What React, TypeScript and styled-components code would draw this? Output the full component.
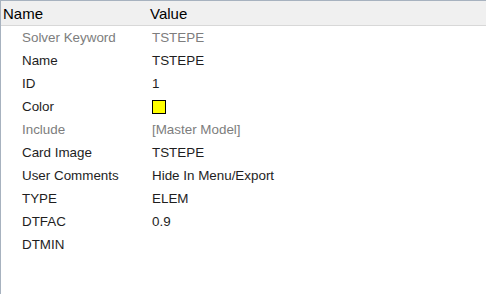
import React from "react";
import styled, { createGlobalStyle } from "styled-components";

const Global = createGlobalStyle`
  html, body { margin: 0; padding: 0; background: #fff; }
  body { font-family: "Liberation Sans", Arial, sans-serif; }
`;

const Panel = styled.div`
  width: 486px;
  height: 294px;
  box-sizing: border-box;
  border-top: 1px solid #a7b2bf;
  border-left: 1px solid #a7b2bf;
  background: #fff;
  display: flex;
  flex-direction: column;
`;

const Header = styled.div`
  display: grid;
  grid-template-columns: 147px 1fr;
  height: 24px;
  background: #f0f0f0;
  border-bottom: 1px solid #d8d8d8;
  font-size: 15px;
  color: #000;
  align-items: center;
`;

const HeadCell = styled.div<{ $pad: number }>`
  padding-left: ${(p) => p.$pad}px;
  padding-top: 1px;
`;

const Body = styled.div`
  display: flex;
  flex-direction: column;
`;

const Row = styled.div<{ $muted?: boolean }>`
  display: grid;
  grid-template-columns: 150px 1fr;
  height: 23px;
  align-items: center;
  font-size: 13.4px;
  color: ${(p) => (p.$muted ? "#7d7d7d" : "#1e1e1e")};
`;

const Label = styled.div`
  padding-left: 21px;
`;

const Value = styled.div`
  padding-left: 1px;
  display: flex;
  align-items: center;
`;

const Swatch = styled.span<{ $color: string }>`
  display: inline-block;
  width: 12px;
  height: 12px;
  background: ${(p) => p.$color};
  border: 1px solid #000;
  margin-top: 1px;
`;

type Item = { name: string; value?: string; muted?: boolean; color?: string };

const items: Item[] = [
  { name: "Solver Keyword", value: "TSTEPE", muted: true },
  { name: "Name", value: "TSTEPE" },
  { name: "ID", value: "1" },
  { name: "Color", color: "#ffff00" },
  { name: "Include", value: "[Master Model]", muted: true },
  { name: "Card Image", value: "TSTEPE" },
  { name: "User Comments", value: "Hide In Menu/Export" },
  { name: "TYPE", value: "ELEM" },
  { name: "DTFAC", value: "0.9" },
  { name: "DTMIN", value: "" },
];

export default function App() {
  return (
    <>
      <Global />
      <Panel>
        <Header>
          <HeadCell $pad={2}>Name</HeadCell>
          <HeadCell $pad={2}>Value</HeadCell>
        </Header>
        <Body>
          {items.map((it) => (
            <Row key={it.name} $muted={it.muted}>
              <Label>{it.name}</Label>
              <Value>{it.color ? <Swatch $color={it.color} /> : it.value}</Value>
            </Row>
          ))}
        </Body>
      </Panel>
    </>
  );
}
